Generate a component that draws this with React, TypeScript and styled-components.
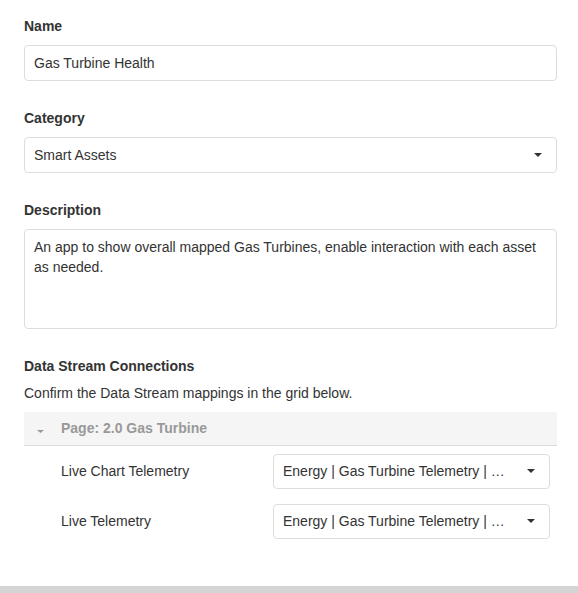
import React, { FC } from "react";
import styled, { createGlobalStyle } from "styled-components";

const colors = {
  text: "#333333",
  muted: "#999999",
  border: "#dddddd",
  groupBg: "#f5f5f5",
  footer: "#d4d4d4",
};

const GlobalStyle = createGlobalStyle`
  html, body {
    margin: 0;
    padding: 0;
    background: #ffffff;
  }
  body {
    font-family: "Liberation Sans", Arial, sans-serif;
    font-size: 14px;
    color: ${colors.text};
  }
`;

const mappings = [
  { name: "Live Chart Telemetry", stream: "Energy | Gas Turbine Telemetry | Live Chart Telemetry" },
  { name: "Live Telemetry", stream: "Energy | Gas Turbine Telemetry | Live Telemetry" },
];

const Caret: FC<{ small?: boolean }> = ({ small }) => (
  <CaretIcon $small={small} viewBox="0 0 8 4" preserveAspectRatio="none" aria-hidden>
    <path d="M0 0 L8 0 L4 4 Z" />
  </CaretIcon>
);

const App: FC = () => (
  <Page>
    <GlobalStyle />
    <Form>
      <FormGroup>
        <Label>Name</Label>
        <Field>Gas Turbine Health</Field>
      </FormGroup>

      <FormGroup>
        <Label>Category</Label>
        <Field>
          <FieldText>Smart Assets</FieldText>
          <Caret />
        </Field>
      </FormGroup>

      <FormGroup>
        <Label>Description</Label>
        <TextArea>
          An app to show overall mapped Gas Turbines, enable interaction with each asset as needed.
        </TextArea>
      </FormGroup>

      <FormGroup>
        <Label>Data Stream Connections</Label>
        <Hint>Confirm the Data Stream mappings in the grid below.</Hint>
        <Grid>
          <GroupHeader>
            <Caret small />
            <span>Page: 2.0 Gas Turbine</span>
          </GroupHeader>
          {mappings.map((m) => (
            <MappingRow key={m.name}>
              <MappingName>{m.name}</MappingName>
              <SelectBox>
                <FieldText>{m.stream}</FieldText>
                <Caret />
              </SelectBox>
            </MappingRow>
          ))}
        </Grid>
      </FormGroup>
    </Form>
    <FooterBar />
  </Page>
);

const Page = styled.div`
  min-height: 100vh;
  display: flex;
  flex-direction: column;
`;

const Form = styled.div`
  flex: 1;
  padding: 15px 21px 0 24px;
`;

const FormGroup = styled.div`
  margin-bottom: 26px;
`;

const Label = styled.div`
  font-weight: 700;
  line-height: 20px;
  padding-top: 1px;
  margin-bottom: 9px;
`;

const Field = styled.div`
  height: 36px;
  box-sizing: border-box;
  border: 1px solid ${colors.border};
  border-radius: 4px;
  padding: 0 14px 0 9px;
  display: flex;
  align-items: center;
  gap: 12px;
  line-height: 20px;
`;

const FieldText = styled.span`
  flex: 1;
  min-width: 0;
  white-space: nowrap;
  overflow: hidden;
  text-overflow: ellipsis;
`;

const TextArea = styled.div`
  height: 100px;
  box-sizing: border-box;
  border: 1px solid ${colors.border};
  border-radius: 4px;
  padding: 7px 9px;
  line-height: 20px;
`;

const Hint = styled.div`
  line-height: 20px;
  margin: -2px 0 9px;
`;

const Grid = styled.div`
  display: flex;
  flex-direction: column;
`;

const GroupHeader = styled.div`
  height: 34px;
  box-sizing: border-box;
  background: ${colors.groupBg};
  border-bottom: 1px solid ${colors.border};
  display: flex;
  align-items: center;
  gap: 17px;
  padding: 0 0 2px 13px;
  color: ${colors.muted};
  font-weight: 700;
`;

const MappingRow = styled.div`
  height: 50px;
  display: flex;
  align-items: center;
  padding: 0 7px 0 37px;
`;

const MappingName = styled.div`
  flex: 1;
`;

const SelectBox = styled(Field)`
  width: 277px;
  height: 35px;
  gap: 17px;
`;

const CaretIcon = styled.svg<{ $small?: boolean }>`
  width: ${(p) => (p.$small ? 7 : 8)}px;
  height: ${(p) => (p.$small ? 3 : 4)}px;
  flex-shrink: 0;
  margin-top: ${(p) => (p.$small ? 8 : 0)}px;
  fill: ${(p) => (p.$small ? colors.muted : colors.text)};
`;

const FooterBar = styled.div`
  height: 7px;
  background: ${colors.footer};
`;

export default App;
